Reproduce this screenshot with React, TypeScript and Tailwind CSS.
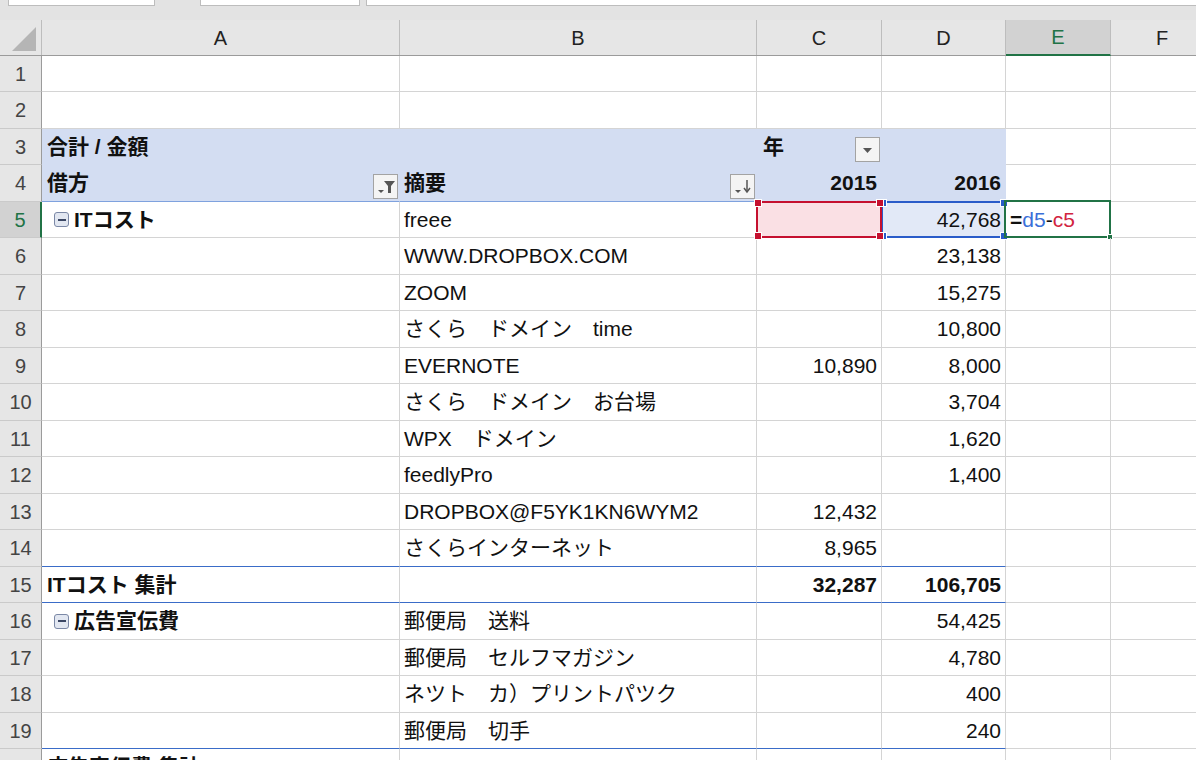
import type { ReactNode } from 'react';

const FILL = 'bg-[#d3ddf2]';

type Row = {
  n: number;
  a?: ReactNode;
  b?: ReactNode;
  c?: ReactNode;
  d?: ReactNode;
  line?: string;
  head?: boolean;
};

function Toggle() {
  return (
    <span className="mr-[5px] flex h-[15px] w-[15px] shrink-0 items-center justify-center rounded-[3px] border border-[#7b88a6] bg-[#e2e7f1]">
      <span className="h-[2px] w-[8px] bg-[#3b4764]" />
    </span>
  );
}

function FilterButton() {
  return (
    <span className="absolute right-[1px] bottom-[2px] flex h-[25px] w-[25px] items-center justify-center border border-[#a3a3a3] bg-[#f4f4f4]">
      <svg width="23" height="23" viewBox="0 0 23 23">
        <path d="M4 15h6l-3 3z" fill="#555" />
        <path d="M10 6h11l-4 5V18h-3v-7z" fill="#555" />
      </svg>
    </span>
  );
}

function SortButton() {
  return (
    <span className="absolute right-[1px] bottom-[2px] flex h-[25px] w-[25px] items-center justify-center border border-[#a3a3a3] bg-[#f4f4f4]">
      <svg width="23" height="23" viewBox="0 0 23 23">
        <path d="M4 15h6l-3 3z" fill="#555" />
        <path d="M16 5v11" stroke="#555" strokeWidth="1.5" />
        <path d="M13 13l3 4 3-4" fill="none" stroke="#555" strokeWidth="1.5" />
      </svg>
    </span>
  );
}

function DropButton() {
  return (
    <span className="absolute right-[1px] bottom-[2px] flex h-[25px] w-[25px] items-center justify-center border border-[#a3a3a3] bg-[#f4f4f4]">
      <svg width="23" height="23" viewBox="0 0 23 23">
        <path d="M7 10h9l-4.5 5z" fill="#555" />
      </svg>
    </span>
  );
}

function Handles({ color }: { color: string }) {
  return (
    <>
      <span className={`absolute -top-[4px] -left-[4px] h-[8px] w-[8px] border border-white ${color}`} />
      <span className={`absolute -top-[4px] -right-[4px] h-[8px] w-[8px] border border-white ${color}`} />
      <span className={`absolute -bottom-[4px] -left-[4px] h-[8px] w-[8px] border border-white ${color}`} />
      <span className={`absolute -right-[4px] -bottom-[4px] h-[8px] w-[8px] border border-white ${color}`} />
    </>
  );
}

const B = ({ children }: { children: ReactNode }) => <span className="font-bold">{children}</span>;

const rows: Row[] = [
  { n: 1 },
  { n: 2 },
  {
    n: 3,
    head: true,
    a: <B>合計 / 金額</B>,
    c: (
      <>
        <span className="pl-[2px] font-bold">年</span>
        <DropButton />
      </>
    ),
  },
  {
    n: 4,
    head: true,
    line: 'border-b-[#7fa2de]',
    a: (
      <>
        <B>借方</B>
        <FilterButton />
      </>
    ),
    b: (
      <>
        <B>摘要</B>
        <SortButton />
      </>
    ),
    c: <B>2015</B>,
    d: <B>2016</B>,
  },
  {
    n: 5,
    a: (
      <span className="flex items-center pl-[7px]">
        <Toggle />
        <B>ITコスト</B>
      </span>
    ),
    b: 'freee',
    d: '42,768',
  },
  { n: 6, b: 'WWW.DROPBOX.COM', d: '23,138' },
  { n: 7, b: 'ZOOM', d: '15,275' },
  { n: 8, b: 'さくら　ドメイン　time', d: '10,800' },
  { n: 9, b: 'EVERNOTE', c: '10,890', d: '8,000' },
  { n: 10, b: 'さくら　ドメイン　お台場', d: '3,704' },
  { n: 11, b: 'WPX　ドメイン', d: '1,620' },
  { n: 12, b: 'feedlyPro', d: '1,400' },
  { n: 13, b: 'DROPBOX@F5YK1KN6WYM2', c: '12,432' },
  { n: 14, b: 'さくらインターネット', c: '8,965', line: 'border-b-[#3a6cc8]' },
  {
    n: 15,
    a: <B>ITコスト 集計</B>,
    c: <B>32,287</B>,
    d: <B>106,705</B>,
    line: 'border-b-[#3a6cc8]',
  },
  {
    n: 16,
    a: (
      <span className="flex items-center pl-[7px]">
        <Toggle />
        <B>広告宣伝費</B>
      </span>
    ),
    b: '郵便局　送料',
    d: '54,425',
  },
  { n: 17, b: '郵便局　セルフマガジン', d: '4,780' },
  { n: 18, b: 'ネツト　カ）プリントパツク', d: '400' },
  { n: 19, b: '郵便局　切手', d: '240', line: 'border-b-[#3a6cc8]' },
  { n: 20, a: <B>広告宣伝費 集計</B>, d: <B>59,845</B> },
];

function SheetRow({ row }: { row: Row }) {
  const sel = row.n === 5;
  const bottom = row.head && row.n === 3 ? 'border-b-[#d3ddf2]' : row.line ?? 'border-b-[#d4d4d4]';
  const right = row.head ? 'border-r-[#d3ddf2]' : 'border-r-[#d4d4d4]';
  const fill = row.head ? FILL : 'bg-white';
  const cell = `relative flex h-full shrink-0 items-center whitespace-nowrap border-r border-b ${right} ${bottom} ${fill}`;

  return (
    <div className={`flex ${row.n % 2 === 1 ? 'h-[36px]' : 'h-[37px]'}`}>
      <div
        className={`flex h-full w-[42px] shrink-0 items-center justify-center border-b border-b-[#cacaca] text-[20px] ${
          sel
            ? 'border-r-2 border-r-[#217346] bg-[#d2d2d2] text-[#217346]'
            : 'border-r border-r-[#9b9b9b] bg-[#e6e6e6] text-[#444]'
        }`}
      >
        {row.n}
      </div>
      <div className={`${cell} w-[358px] pl-[5px]`}>{row.a}</div>
      <div className={`${cell} w-[357px] pl-[4px]`}>{row.b}</div>
      <div
        className={`${cell} w-[125px] pr-[4px] ${row.n === 3 ? 'justify-start pl-[4px]' : 'justify-end'} ${
          sel ? 'z-20' : ''
        }`}
      >
        {sel && (
          <span className="absolute -inset-[1px] border-2 border-[#c5102f] bg-[#fae0e4]">
            <Handles color="bg-[#c5102f]" />
          </span>
        )}
        {row.c}
      </div>
      <div className={`${cell} w-[124px] justify-end pr-[4px] ${sel ? 'z-10' : ''}`}>
        {sel && (
          <span className="absolute -inset-[1px] border-2 border-[#2a5cc9] bg-[#e2e9f7]">
            <Handles color="bg-[#2a5cc9]" />
          </span>
        )}
        <span className="relative">{row.d}</span>
      </div>
      <div className="relative z-30 flex h-full w-[105px] shrink-0 items-center border-r border-b border-[#d4d4d4] pl-[4px]">
        {sel && (
          <>
            <span className="absolute -top-[2px] -right-[1px] -bottom-[1px] -left-[2px] border-2 border-[#217346]">
              <span className="absolute -right-[4px] -bottom-[4px] h-[6px] w-[6px] border border-white bg-[#217346]" />
            </span>
            <span className="relative">
              <span className="font-bold">=</span>
              <span className="text-[#3a6fd8]">d5</span>-<span className="text-[#d2243f]">c5</span>
            </span>
          </>
        )}
      </div>
      <div className="flex h-full flex-1 border-b border-[#d4d4d4]" />
    </div>
  );
}

export default function App() {
  return (
    <div className="h-[760px] w-[1196px] overflow-hidden bg-white font-['Liberation_Sans','Noto_Sans_CJK_JP',sans-serif] text-[21px] text-[#111]">
      {/* name box / formula bar edges */}
      <div className="flex h-[20px] items-start bg-[#e3e3e3]">
        <div className="ml-[8px] h-[6px] w-[147px] border border-t-0 border-[#bdbdbd] bg-white" />
        <div className="ml-[45px] h-[6px] w-[160px] border border-t-0 border-[#bdbdbd] bg-white" />
        <div className="ml-[6px] h-[6px] flex-1 border border-t-0 border-r-0 border-[#bdbdbd] bg-white" />
      </div>

      {/* column headers */}
      <div className="flex h-[36px] border-b border-[#9b9b9b] bg-[#e6e6e6] text-[20px] text-[#222]">
        <div className="relative w-[42px] shrink-0 border-r border-[#bdbdbd]">
          <svg className="absolute top-0 left-0" width="42" height="35" viewBox="0 0 42 35">
            <path d="M36 7v24H12z" fill="#b5b5b5" />
          </svg>
        </div>
        <div className="flex w-[358px] shrink-0 items-center justify-center border-r border-[#bdbdbd]">A</div>
        <div className="flex w-[357px] shrink-0 items-center justify-center border-r border-[#bdbdbd]">B</div>
        <div className="flex w-[125px] shrink-0 items-center justify-center border-r border-[#bdbdbd]">C</div>
        <div className="flex w-[124px] shrink-0 items-center justify-center border-r border-[#bdbdbd]">D</div>
        <div className="-mb-px flex w-[105px] shrink-0 items-center justify-center border-r border-b-2 border-r-[#bdbdbd] border-b-[#217346] bg-[#d2d2d2] text-[#217346]">
          E
        </div>
        <div className="flex flex-1 items-center pl-[45px]">F</div>
      </div>

      {rows.map((row) => (
        <SheetRow key={row.n} row={row} />
      ))}
    </div>
  );
}
